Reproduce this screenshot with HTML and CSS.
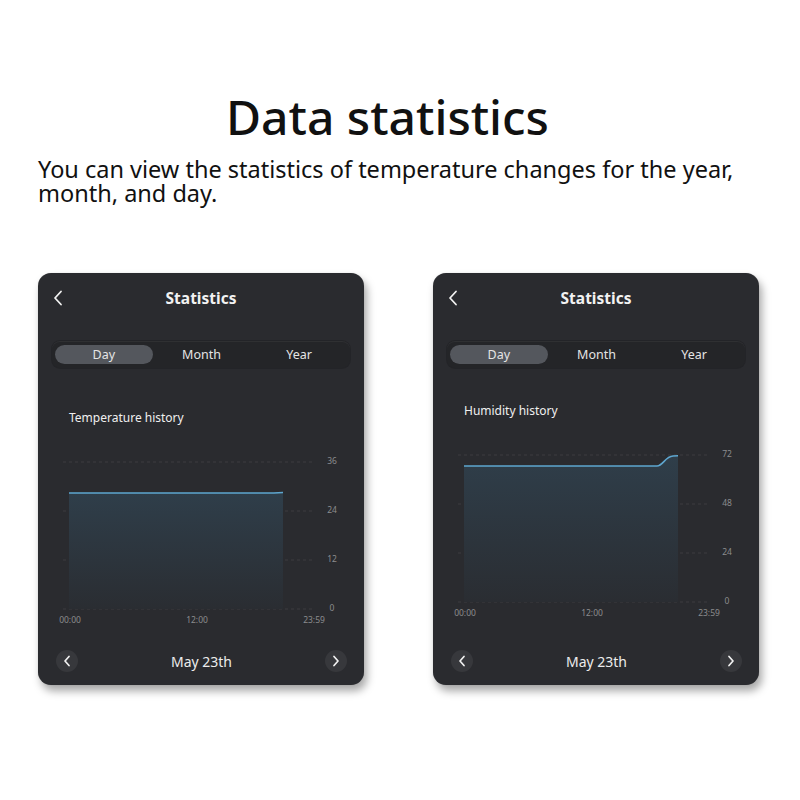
FILE: index.html
```html
<!DOCTYPE html>
<html lang="en">
<head>
<meta charset="utf-8">
<title>Data statistics</title>
<link rel="stylesheet" href="styles.css">
</head>
<body>
<main class="page">
  <header class="intro">
    <h1 class="intro-title">Data statistics</h1>
    <p class="intro-text">You can view the statistics of temperature changes for the year, month, and day.</p>
  </header>

  <section class="cards">
    <article class="card">
      <div class="card-head">
        <svg class="back" width="10" height="16" viewBox="0 0 10 16"><path d="M8 1.5 L2 8 L8 14.5" fill="none" stroke="#f2f2f2" stroke-width="1.8" stroke-linecap="round" stroke-linejoin="round"/></svg>
        <h2 class="card-title">Statistics</h2>
      </div>
      <div class="seg">
        <span class="seg-item is-active">Day</span>
        <span class="seg-item">Month</span>
        <span class="seg-item">Year</span>
      </div>
      <h3 class="chart-title">Temperature history</h3>
      <svg class="chart" width="326" height="205" viewBox="0 0 326 205">
        <defs>
          <linearGradient id="fillA" x1="0" y1="0" x2="0" y2="1">
            <stop offset="0" stop-color="#2f3e4a"/>
            <stop offset="1" stop-color="#2a2d32"/>
          </linearGradient>
        </defs>
        <g class="grid">
          <line x1="25" y1="36" x2="277" y2="36"/>
          <line x1="25" y1="85" x2="277" y2="85"/>
          <line x1="25" y1="134" x2="277" y2="134"/>
          <line x1="25" y1="183" x2="277" y2="183"/>
        </g>
        <path d="M31 67 L245 67 L245 183 L31 183 Z" fill="url(#fillA)"/>
        <path d="M31 67 L236 67 Q240 66.5 245 66.5" fill="none" stroke="#5ea6cf" stroke-width="1.6"/>
        <g class="ylab">
          <text x="294" y="36">36</text>
          <text x="294" y="85">24</text>
          <text x="294" y="134">12</text>
          <text x="294" y="183">0</text>
        </g>
        <g class="xlab">
          <text x="32" y="195">00:00</text>
          <text x="159" y="195">12:00</text>
          <text x="276" y="195">23:59</text>
        </g>
      </svg>
      <div class="card-foot">
        <span class="nav-btn"><svg width="8" height="12" viewBox="0 0 8 12"><path d="M6 1.5 L2 6 L6 10.5" fill="none" stroke="#f2f2f2" stroke-width="1.7" stroke-linecap="round" stroke-linejoin="round"/></svg></span>
        <span class="date">May 23th</span>
        <span class="nav-btn"><svg width="8" height="12" viewBox="0 0 8 12"><path d="M2 1.5 L6 6 L2 10.5" fill="none" stroke="#f2f2f2" stroke-width="1.7" stroke-linecap="round" stroke-linejoin="round"/></svg></span>
      </div>
    </article>

    <article class="card card--humidity">
      <div class="card-head">
        <svg class="back" width="10" height="16" viewBox="0 0 10 16"><path d="M8 1.5 L2 8 L8 14.5" fill="none" stroke="#f2f2f2" stroke-width="1.8" stroke-linecap="round" stroke-linejoin="round"/></svg>
        <h2 class="card-title">Statistics</h2>
      </div>
      <div class="seg">
        <span class="seg-item is-active">Day</span>
        <span class="seg-item">Month</span>
        <span class="seg-item">Year</span>
      </div>
      <h3 class="chart-title">Humidity history</h3>
      <svg class="chart" width="326" height="205" viewBox="0 0 326 205">
        <defs>
          <linearGradient id="fillB" x1="0" y1="0" x2="0" y2="1">
            <stop offset="0" stop-color="#2f3e4a"/>
            <stop offset="1" stop-color="#2a2d32"/>
          </linearGradient>
        </defs>
        <g class="grid">
          <line x1="25" y1="36" x2="277" y2="36"/>
          <line x1="25" y1="85" x2="277" y2="85"/>
          <line x1="25" y1="134" x2="277" y2="134"/>
          <line x1="25" y1="183" x2="277" y2="183"/>
        </g>
        <path d="M31 47 L224 47 C230 47 232 37.5 240 37 L245 36.8 L245 183 L31 183 Z" fill="url(#fillB)"/>
        <path d="M31 47 L224 47 C230 47 232 37.5 240 37 L245 36.8" fill="none" stroke="#5ea6cf" stroke-width="1.6"/>
        <g class="ylab">
          <text x="294" y="36">72</text>
          <text x="294" y="85">48</text>
          <text x="294" y="134">24</text>
          <text x="294" y="183">0</text>
        </g>
        <g class="xlab">
          <text x="32" y="195">00:00</text>
          <text x="159" y="195">12:00</text>
          <text x="276" y="195">23:59</text>
        </g>
      </svg>
      <div class="card-foot">
        <span class="nav-btn"><svg width="8" height="12" viewBox="0 0 8 12"><path d="M6 1.5 L2 6 L6 10.5" fill="none" stroke="#f2f2f2" stroke-width="1.7" stroke-linecap="round" stroke-linejoin="round"/></svg></span>
        <span class="date">May 23th</span>
        <span class="nav-btn"><svg width="8" height="12" viewBox="0 0 8 12"><path d="M2 1.5 L6 6 L2 10.5" fill="none" stroke="#f2f2f2" stroke-width="1.7" stroke-linecap="round" stroke-linejoin="round"/></svg></span>
      </div>
    </article>
  </section>
</main>
</body>
</html>
```

FILE: styles.css
```css
* { box-sizing: border-box; }
html, body { margin: 0; padding: 0; background: #ffffff; }
body { font-family: "Noto Sans", "Open Sans", sans-serif; color: #111; }

.page { width: 800px; height: 800px; }

.intro { padding: 88px 0 0 38px; }
.intro-title {
  margin: 0 0 0 188px;
  font-size: 48px;
  line-height: 58px;
  font-weight: 500;
  color: #111;
}
.intro-text {
  margin: 11px 0 0 0;
  width: 740px;
  font-size: 23.5px;
  line-height: 24px;
  font-weight: 400;
  color: #111;
}

.cards {
  display: flex;
  gap: 69px;
  padding: 68px 0 0 38px;
}

.card {
  width: 326px;
  height: 412px;
  border-radius: 13px;
  background: #2a2b2f;
  box-shadow: 3px 6px 8px rgba(0, 0, 0, 0.35), 0 0 1px rgba(0, 0, 0, 0.2);
  display: flex;
  flex-direction: column;
  color: #eee;
  font-family: "Noto Sans", sans-serif;
}

.card-head {
  height: 50px;
  display: flex;
  align-items: center;
  justify-content: center;
  position: relative;
}
.back { position: absolute; left: 15px; top: 17px; }
.card-title {
  margin: 0;
  font-size: 15.5px;
  font-weight: 700;
  color: #f2f2f2;
}

.seg {
  margin: 18px 14px 0;
  height: 27px;
  padding: 4px 2px 4px 3px;
  border-radius: 8px;
  background: #242528;
  box-shadow: inset 0 1px 0 rgba(255, 255, 255, 0.05), 0 0 0 1px rgba(0, 0, 0, 0.15);
  display: grid;
  grid-template-columns: repeat(3, 1fr);
}
.seg-item {
  display: flex;
  align-items: center;
  justify-content: center;
  font-size: 12.5px;
  color: #e4e4e4;
  border-radius: 10px;
}
.seg-item.is-active { background: #54575d; }

.chart-title {
  margin: 42px 0 0 31px;
  font-size: 12px;
  line-height: 16px;
  font-weight: 400;
  color: #f0f0f0;
}
.card--humidity .chart-title { margin-top: 35px; }

.chart { display: block; }
.grid line { stroke: #3c3d41; stroke-width: 1; stroke-dasharray: 3 3; }
.ylab text, .xlab text {
  font-family: "Noto Sans", sans-serif;
  font-size: 8.5px;
  fill: #8a8b8e;
  text-anchor: middle;
  dominant-baseline: middle;
}

.card-foot {
  margin-top: auto;
  height: 48px;
  padding: 0 17px 0 18px;
  display: flex;
  align-items: center;
  justify-content: space-between;
}
.nav-btn {
  width: 22px;
  height: 22px;
  border-radius: 50%;
  background: #37383c;
  display: flex;
  align-items: center;
  justify-content: center;
}
.date { font-size: 14px; color: #ececec; }
```
